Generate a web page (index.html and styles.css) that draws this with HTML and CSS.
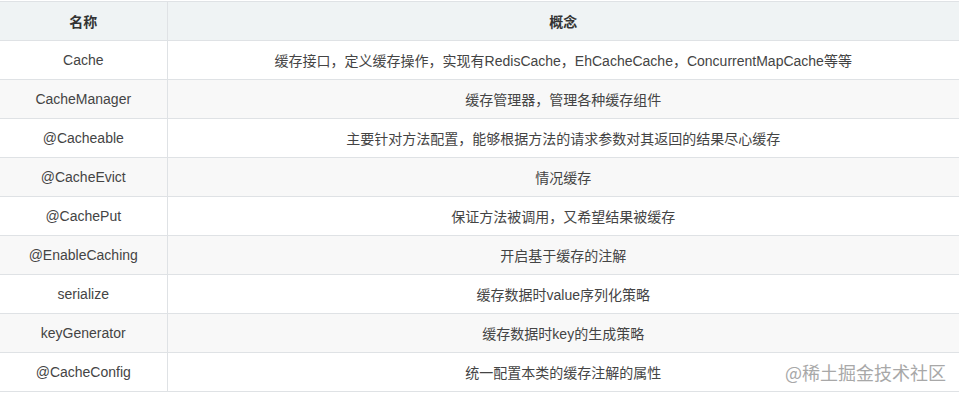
FILE: index.html
```html
<!DOCTYPE html>
<html lang="zh-CN">
<head>
  <meta charset="UTF-8" />
  <meta name="viewport" content="width=device-width, initial-scale=1.0" />
  <title>Spring Cache 概念</title>
  <link rel="stylesheet" href="styles.css">
</head>
<body>
  <div class="wrap">
    <table class="cache-table">
      <thead>
        <tr>
          <th class="col-name">名称</th>
          <th>概念</th>
        </tr>
      </thead>
      <tbody>
        <tr><td>Cache</td><td>缓存接口，定义缓存操作，实现有RedisCache，EhCacheCache，ConcurrentMapCache等等</td></tr>
        <tr><td>CacheManager</td><td>缓存管理器，管理各种缓存组件</td></tr>
        <tr><td>@Cacheable</td><td>主要针对方法配置，能够根据方法的请求参数对其返回的结果尽心缓存</td></tr>
        <tr><td>@CacheEvict</td><td>情况缓存</td></tr>
        <tr><td>@CachePut</td><td>保证方法被调用，又希望结果被缓存</td></tr>
        <tr><td>@EnableCaching</td><td>开启基于缓存的注解</td></tr>
        <tr><td>serialize</td><td>缓存数据时value序列化策略</td></tr>
        <tr><td>keyGenerator</td><td>缓存数据时key的生成策略</td></tr>
        <tr><td>@CacheConfig</td><td>统一配置本类的缓存注解的属性</td></tr>
      </tbody>
    </table>
    <!-- site watermark -->
    <div class="watermark">@稀土掘金技术社区</div>
  </div>
</body>
</html>
```

FILE: styles.css
```css
body {
  margin: 0;
  padding: 0;
  background-color: #fff;
  font-family: 'Liberation Sans', Arial, 'Noto Sans CJK SC', sans-serif;
  color: #444;
}
.wrap {
  position: relative;
  padding-top: 1px;
}
.cache-table {
  width: 100%;
  border-collapse: collapse;
  font-size: 14px;
}
.cache-table th,
.cache-table td {
  height: 39px;
  padding: 0 8px;
  border: 1px solid #dfe2e5;
  text-align: center;
  box-sizing: border-box;
}
.cache-table tr > :first-child {
  border-left: none;
}
.cache-table tr > :last-child {
  border-right: none;
}
.cache-table th {
  background-color: #eff3f4;
  font-weight: bold;
  color: #333;
}
.cache-table .col-name {
  width: 167px;
}
.cache-table tbody tr:nth-child(even) {
  background-color: #f8f8f8;
}
.watermark {
  position: absolute;
  right: 13px;
  bottom: 7px;
  font-size: 18px;
  color: #a8a8a8;
  font-family: 'Noto Sans CJK SC', sans-serif;
  text-shadow: 0 0 2px #fff;
}
```
